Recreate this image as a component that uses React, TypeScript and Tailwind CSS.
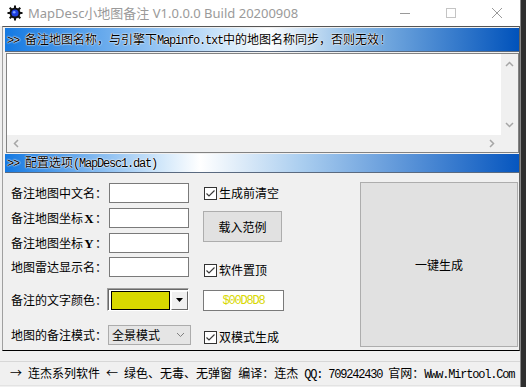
import React from "react";

const L = ({ children }: { children: React.ReactNode }) => (
  <span className="font-['Liberation_Mono',monospace] tracking-[-1.2px] whitespace-pre">{children}</span>
);

const XY = ({ c }: { c: string }) => (
  <span className="inline-block w-[12px] text-center font-['Liberation_Serif',serif] font-bold text-[13px]">{c}</span>
);

const Check = ({ label }: { label: string }) => (
  <div className="flex items-center h-[20px] pl-[1px] gap-[2px]">
    <span className="w-[13px] h-[13px] border border-[#333333] bg-white flex items-center justify-center shrink-0">
      <svg width="11" height="11" viewBox="0 0 11 11">
        <path d="M1.5 5.5 L4 8 L9.5 2.5" stroke="#3a3a3a" strokeWidth="1.2" fill="none" />
      </svg>
    </span>
    <span>{label}</span>
  </div>
);

const Input = () => <div className="w-[80px] h-[20px] border border-[#7a7a7a] bg-white" />;

const Label = ({ children, w }: { children: React.ReactNode; w: string }) => (
  <div className={`${w} shrink-0 whitespace-nowrap`}>
    <span>{children}</span>
  </div>
);

const Chev = ({ d }: { d: string }) => (
  <svg width="9" height="9" viewBox="0 0 9 9">
    <path d={d} stroke="#a6a6a6" strokeWidth="1.5" fill="none" />
  </svg>
);

const Icon = () => (
  <svg width="16" height="16" viewBox="0 0 16 16">
    <g fill="#111">
      <circle cx="8" cy="8" r="5.5" />
      <rect x="7" y="0.5" width="2" height="15" />
      <rect x="0.5" y="7" width="15" height="2" />
      <rect x="7" y="0.5" width="2" height="15" transform="rotate(45 8 8)" />
      <rect x="7" y="0.5" width="2" height="15" transform="rotate(-45 8 8)" />
    </g>
    <circle cx="8" cy="8" r="3.6" fill="#1d3fe0" />
    <circle cx="7.2" cy="7.2" r="1.3" fill="#7fa2ff" />
  </svg>
);

export default function App() {
  return (
    <div className="w-[526px] h-[387px] bg-[#2f2f2f] flex overflow-hidden font-['Noto_Sans_CJK_SC',sans-serif] text-[12px] text-black leading-none">
      <div className="w-[521px] h-full bg-[#f0f0f0] flex flex-col border-r border-[#8a8a8a]">
        {/* Title bar */}
        <div className="h-[26px] bg-white flex items-center shrink-0">
          <div className="ml-[7px] w-[16px] h-[16px] flex">
            <Icon />
          </div>
          <div className="ml-[5px] text-[13px] text-[#9a9a9a] font-['Noto_Sans','Noto_Sans_CJK_SC',sans-serif] whitespace-nowrap">
            MapDesc小地图备注 V1.0.0.0 Build 20200908
          </div>
          <div className="ml-auto flex h-full">
            <div className="w-[46px] h-full flex items-center justify-center">
              <svg width="10" height="10" viewBox="0 0 10 10">
                <path d="M0 5.5 H10" stroke="#9a9a9a" strokeWidth="1" />
              </svg>
            </div>
            <div className="w-[46px] h-full flex items-center justify-center">
              <svg width="10" height="10" viewBox="0 0 10 10">
                <rect x="0.5" y="0.5" width="9" height="9" stroke="#c4c4c4" strokeWidth="1" fill="none" />
              </svg>
            </div>
            <div className="w-[46px] h-full flex items-center justify-center">
              <svg width="10" height="10" viewBox="0 0 10 10">
                <path d="M0 0 L10 10 M10 0 L0 10" stroke="#9a9a9a" strokeWidth="1" />
              </svg>
            </div>
          </div>
        </div>

        {/* Frame */}
        <div className="ml-[2px] w-[518px] h-[325px] border-l border-t border-r border-b border-l-[#a0a0a0] border-t-[#555555] border-r-[#646464] border-b-black flex flex-col shrink-0">
          {/* Bar 1 */}
          <div className="ml-[2px] mt-[1px] h-[24px] w-[514px] bg-[linear-gradient(to_right,#1479e2,#d9ecfb_45%,#ffffff_51%,#8cbbe6_68%,#0052bb)] border-b border-[#5a6a80] flex items-center pl-[2px] whitespace-nowrap [text-shadow:0_0_1px_#fff,0_0_1px_#fff,0_0_2px_#fff]">
            <span>
              <L>&gt;&gt; </L>
              <span>备注地图名称，与引擎下</span>
              <L>Mapinfo.txt</L>
              <span>中的地图名称同步，否则无效</span>
              <L>!</L>
            </span>
          </div>
          {/* Textarea */}
          <div className="ml-[3px] mt-[1px] w-[513px] h-[100px] border border-[#828282] bg-white flex flex-col">
            <div className="flex flex-1">
              <div className="flex-1" />
              <div className="w-[17px] bg-[#f0f0f0] flex flex-col items-center justify-between pt-[6px] pb-[6px]">
                <Chev d="M1 6 L4.5 2.5 L8 6" />
                <Chev d="M1 3 L4.5 6.5 L8 3" />
              </div>
            </div>
            <div className="h-[17px] flex">
              <div className="flex-1 bg-[#f0f0f0] flex items-center justify-between px-[5px]">
                <Chev d="M6 1 L2.5 4.5 L6 8" />
                <Chev d="M3 1 L6.5 4.5 L3 8" />
              </div>
              <div className="w-[17px] bg-[#f0f0f0]" />
            </div>
          </div>
          {/* Bar 2 */}
          <div className="ml-[2px] mt-[1px] h-[19px] w-[514px] bg-[linear-gradient(to_right,#1479e2,#cfe6fa_30%,#ffffff_38%,#a9cdef_58%,#0656bf)] border-b border-[#5a6a80] flex items-center pl-[2px] whitespace-nowrap [text-shadow:0_0_1px_#fff,0_0_1px_#fff,0_0_2px_#fff]">
            <span>
              <L>&gt;&gt; </L>
              <span>配置选项</span>
              <L>(MapDesc1.dat)</L>
            </span>
          </div>

          {/* Config */}
          <div className="flex flex-1">
            {/* left column */}
            <div className="w-[188px] pl-[8px] flex flex-col shrink-0">
              <div className="mt-[10px] h-[20px] flex items-center">
                <Label w="w-[98px]">备注地图中文名：</Label>
                <Input />
              </div>
              <div className="mt-[5px] h-[20px] flex items-center">
                <Label w="w-[98px]">
                  备注地图坐标<XY c="X" />：
                </Label>
                <Input />
              </div>
              <div className="mt-[5px] h-[20px] flex items-center">
                <Label w="w-[98px]">
                  备注地图坐标<XY c="Y" />：
                </Label>
                <Input />
              </div>
              <div className="mt-[4px] h-[20px] flex items-center">
                <Label w="w-[98px]">地图雷达显示名：</Label>
                <Input />
              </div>
              <div className="mt-[11px] h-[23px] flex items-center">
                <Label w="w-[96px]">备注的文字颜色：</Label>
                <div className="w-[82px] h-[23px] border-t border-l border-b border-r border-t-[#a0a0a0] border-l-[#a0a0a0] border-b-white border-r-white">
                  <div className="w-full h-full border-t border-l border-t-[#696969] border-l-[#696969] bg-white flex items-center pl-[2px] gap-[1px]">
                    <div className="w-[59px] h-[19px] border border-black bg-[#d8d800]" />
                    <div className="w-[17px] h-[19px] bg-[#f0f0f0] border-t border-l border-r border-b border-t-white border-l-white border-r-[#696969] border-b-[#696969] flex items-center justify-center">
                      <svg width="7" height="4" viewBox="0 0 7 4">
                        <path d="M0 0 H7 L3.5 4 Z" fill="#000" />
                      </svg>
                    </div>
                  </div>
                </div>
              </div>
              <div className="mt-[14px] h-[20px] flex items-center">
                <Label w="w-[97px]">地图的备注模式：</Label>
                <div className="w-[83px] h-[20px] border border-[#acacac] bg-[#e5e5e5] flex items-center pl-[3px] pr-[5px]">
                  <span>全景模式</span>
                  <svg className="ml-auto" width="9" height="6" viewBox="0 0 9 6">
                    <path d="M1 1 L4.5 4.5 L8 1" stroke="#808080" strokeWidth="1" fill="none" />
                  </svg>
                </div>
              </div>
            </div>

            {/* right column */}
            <div className="ml-[12px] w-[81px] flex flex-col shrink-0">
              <div className="mt-[10px]">
                <Check label="生成前清空" />
              </div>
              <div className="mt-[8px] w-[79px] h-[31px] bg-[#e1e1e1] border border-[#adadad] flex items-center justify-center">
                载入范例
              </div>
              <div className="mt-[18px]">
                <Check label="软件置顶" />
              </div>
              <div className="mt-[10px] w-[81px] h-[21px] border border-[#7a7a7a] bg-white flex items-center justify-center text-[#d8d800]">
                <L>$00D8D8</L>
              </div>
              <div className="mt-[16px]">
                <Check label="双模式生成" />
              </div>
            </div>

            {/* big button */}
            <div className="ml-[76px] mt-[9px] w-[158px] h-[165px] bg-[#e1e1e1] border border-[#adadad] flex items-center justify-center">
              一键生成
            </div>
          </div>
        </div>

        {/* Status bar */}
        <div className="mt-[10px] h-[24px] border-t border-[#d7d7d7] flex items-center pl-[10px] whitespace-nowrap">
          <span>
            <span>→</span>
            <L> </L>
            <span>连杰系列软件</span>
            <L> </L>
            <span>←</span>
            <L> </L>
            <span>绿色、无毒、无弹窗</span>
            <L> </L>
            <span>编译：连杰</span>
            <L> QQ: 709242430 </L>
            <span>官网：</span>
            <L>Www.Mirtool.Com</L>
          </span>
        </div>
        <div className="flex-1 border-t border-[#e3e3e3]" />
      </div>
      <div className="flex-1" />
    </div>
  );
}
